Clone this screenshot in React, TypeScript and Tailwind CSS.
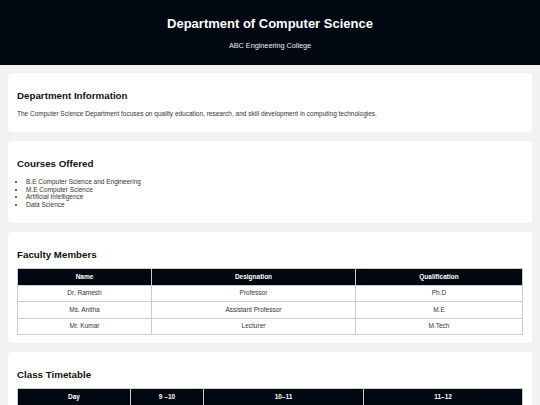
const faculty = [
  { name: 'Dr. Ramesh', designation: 'Professor', qualification: 'Ph.D' },
  { name: 'Ms. Anitha', designation: 'Assistant Professor', qualification: 'M.E' },
  { name: 'Mr. Kumar', designation: 'Lecturer', qualification: 'M.Tech' },
];

const courses = [
  'B.E Computer Science and Engineering',
  'M.E Computer Science',
  'Artificial Intelligence',
  'Data Science',
];

function Card({ title, children }: { title: string; children: React.ReactNode }) {
  return (
    <section className="bg-white rounded-[4px] px-[9px] pt-[17px] pb-[8px] mb-[9px]">
      <h2 className="text-[9.75px] leading-[12px] font-bold text-[#111] mb-[8px]">{title}</h2>
      {children}
    </section>
  );
}

export default function App() {
  return (
    <div className="min-h-screen bg-[#f2f2f2] font-['Liberation_Sans',Arial,sans-serif] text-[#333]">
      {/* Header */}
      <header className="bg-[#020812] text-white text-center h-[65px] pt-[16px]">
        <h1 className="text-[13px] leading-[16px] font-bold">Department of Computer Science</h1>
        <p className="text-[7.25px] leading-[8px] mt-[10px] text-[#eee]">ABC Engineering College</p>
      </header>

      <main className="px-[8px] pt-[8px]">
        <Card title="Department Information">
          <p className="text-[6.5px] leading-[8px] mb-[6px]">
            The Computer Science Department focuses on quality education, research, and skill development in computing technologies.
          </p>
        </Card>

        <Card title="Courses Offered">
          <ul className="list-disc pl-[9px] text-[6.5px] leading-[7.5px] mb-[7px]">
            {courses.map((c) => (
              <li key={c}>{c}</li>
            ))}
          </ul>
        </Card>

        <Card title="Faculty Members">
          <table className="w-full border-collapse text-[6.5px] text-center -mt-[1px]">
            <thead>
              <tr className="bg-[#020812] text-white h-[16.5px]">
                <th className="w-[134px] border border-[#ccc] font-bold">Name</th>
                <th className="w-[204px] border border-[#ccc] font-bold">Designation</th>
                <th className="border border-[#ccc] font-bold">Qualification</th>
              </tr>
            </thead>
            <tbody>
              {faculty.map((f) => (
                <tr key={f.name} className="h-[16.5px]">
                  <td className="border border-[#ccc]">{f.name}</td>
                  <td className="border border-[#ccc]">{f.designation}</td>
                  <td className="border border-[#ccc]">{f.qualification}</td>
                </tr>
              ))}
            </tbody>
          </table>
        </Card>

        <Card title="Class Timetable">
          <table className="w-full border-collapse text-[6.5px] text-center -mt-[1px]">
            <thead>
              <tr className="bg-[#020812] text-white h-[16.5px]">
                <th className="w-[113px] border border-[#ccc] font-bold">Day</th>
                <th className="w-[73px] border border-[#ccc] font-bold">9 –10</th>
                <th className="w-[160px] border border-[#ccc] font-bold">10–11</th>
                <th className="border border-[#ccc] font-bold">11–12</th>
              </tr>
            </thead>
            <tbody>
              <tr className="h-[16.5px]">
                <td className="border border-[#ccc]">Monday</td>
                <td className="border border-[#ccc]">DBMS</td>
                <td className="border border-[#ccc]">Operating Systems</td>
                <td className="border border-[#ccc]">Computer Networks</td>
              </tr>
            </tbody>
          </table>
        </Card>
      </main>
    </div>
  );
}
